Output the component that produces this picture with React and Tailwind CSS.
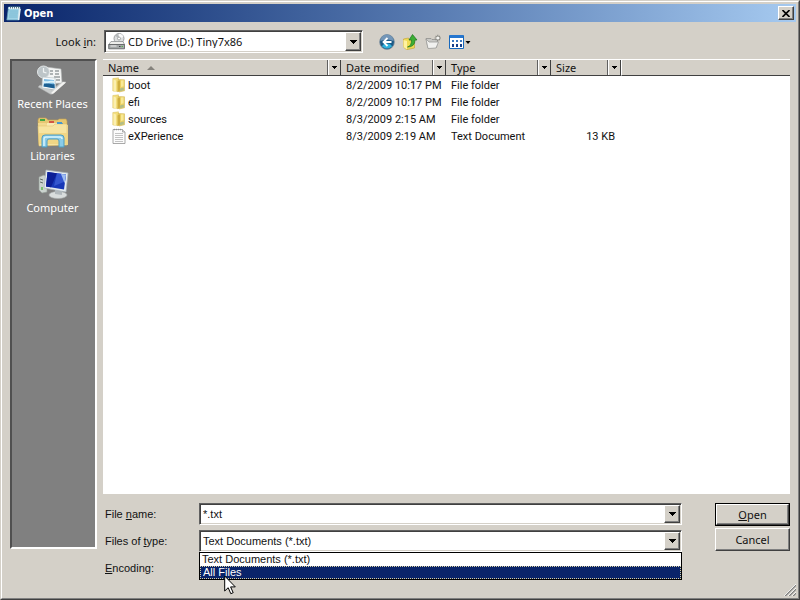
import React, { useState } from 'react';

const files = [
  { name: 'boot', date: '8/2/2009 10:17 PM', type: 'File folder', size: '', icon: FolderIcon },
  { name: 'efi', date: '8/2/2009 10:17 PM', type: 'File folder', size: '', icon: FolderIcon },
  { name: 'sources', date: '8/3/2009 2:15 AM', type: 'File folder', size: '', icon: FolderIcon },
  { name: 'eXPerience', date: '8/3/2009 2:19 AM', type: 'Text Document', size: '13 KB', icon: TextFileIcon },
];

const places = [
  { label: 'Recent Places', icon: RecentIcon },
  { label: 'Libraries', icon: LibrariesIcon },
  { label: 'Computer', icon: ComputerIcon },
];

const columns = ['Name', 'Date modified', 'Type', 'Size'];

const raised = 'border border-t-white border-l-white border-r-[#404040] border-b-[#404040] shadow-[inset_-1px_-1px_0_#808080]';
const sunken = 'border border-t-[#606060] border-l-[#606060] border-r-white border-b-white shadow-[inset_1px_1px_0_#404040,inset_-1px_-1px_0_#d4d0c8]';

function NotepadIcon() {
  return (
    <svg viewBox="0 0 16 16" className="w-4 h-4">
      <path d="M2.500 2h11.500l-1 13H.8z" fill="#9fd3e6" stroke="#5d9ab4" strokeWidth=".7" />
      <path d="M2.700 2h11l-.2 2H2.400z" fill="#e9f7fb" />
      <path d="M3.500 6h8.500M3.500 8h8.500M3 10h8.500M3 12h8.500" stroke="#6fb2cc" strokeWidth=".8" />
      <path d="M4.500 1v2.500M6.500 1v2.500M8.500 1v2.500M10.500 1v2.500M12.500 1v2.500" stroke="#37586c" strokeWidth=".8" />
      <path d="M13 3l1.800 1-1.500 11h-1.500z" fill="#e2eef2" />
    </svg>
  );
}

function DriveIcon() {
  return (
    <svg viewBox="0 0 17 17" className="w-[17px] h-[17px]">
      <circle cx="11" cy="5.500" r="5" fill="#dcdedf" stroke="#8b8e90" strokeWidth=".8" />
      <path d="M11 .8a4.700 4.700 0 0 1 4.400 3.200L11 5.500z" fill="#fafafa" />
      <path d="M7 3q1-2 3-2l1 4z" fill="#b4b8ba" />
      <circle cx="11" cy="5.500" r="1.500" fill="#fff" stroke="#85898b" strokeWidth=".7" />
      <path d="M3 8.500h12l1.500 3H.8z" fill="#ededeb" stroke="#84868a" strokeWidth=".7" />
      <path d="M.7 11.500h15.800v4.300H.7z" fill="#a5a8a9" stroke="#595c5e" strokeWidth=".8" />
      <path d="M2.500 13h6" stroke="#eee" />
      <path d="M11 13.500h1.500" stroke="#3d4245" />
      <path d="M13.500 13.500H15" stroke="#50b14b" />
    </svg>
  );
}

function FolderIcon() {
  return (
    <svg viewBox="0 0 14 16" className="w-3.5 h-4 shrink-0">
      <path d="M.8 1.500L6.500.8v13.700L.8 14z" fill="#f3de7d" stroke="#d9bf5c" strokeWidth=".5" />
      <path d="M6 2.500l6.500.3v11L7 15z" fill="#ead063" stroke="#cdae49" strokeWidth=".5" />
      <path d="M1.500 2.500l2.500 1v11.200l-2.500-1z" fill="#fbefb0" />
      <path d="M5.500 4.500L8 3.300v10.200l-2.500 1.700z" fill="#cfae3f" />
      <path d="M9 3.500l2.500-.3v6L9 10z" fill="#f8e997" />
      <path d="M8 11.500l3.800-1v2.800L8 14.300z" fill="#b2bd86" />
    </svg>
  );
}

function TextFileIcon() {
  return (
    <svg viewBox="0 0 14 16" className="w-3.5 h-4 shrink-0">
      <path d="M1 1.500h9.500L13 4v11.500H1z" fill="#fcfcfc" stroke="#939393" strokeWidth=".8" />
      <path d="M10.500 1.500V4H13" fill="#ddd" stroke="#939393" strokeWidth=".7" />
      <path d="M3 5.500h8M3 7.500h8M3 9.500h8M3 11.500h8M3 13.500h8" stroke="#b4b4b4" strokeWidth=".8" />
      <path d="M2.500.8v1.500M4.500.8v1.500M6.500.8v1.500M8.500.8v1.500" stroke="#858585" strokeWidth=".7" />
    </svg>
  );
}

function RecentIcon() {
  return (
    <svg viewBox="0 0 32 32" className="w-8 h-8">
      <path d="M2 22l12 7q2 1 4-1l12-11q-4-1-6 1l-8 7-12-5z" fill="#c9cccc" stroke="#a4a7a7" strokeWidth=".5" />
      <path d="M10 2l15 2 1 14-16 1z" fill="#f4f5f4" stroke="#b5b9b9" strokeWidth=".6" />
      <path d="M14 6h3M19 6h4M14 9h3M19 9h4M18 12h6M20 15h4" stroke="#969d9f" strokeWidth="1.300" />
      <circle cx="7.500" cy="7" r="6" fill="#bdc5c8" stroke="#e3e7e8" />
      <path d="M7.500 3v4l3 1" fill="none" stroke="#f0f3f4" strokeWidth="1.200" />
      <path d="M6.500 12l12.500 1 1 12-14-2z" fill="#f7fafb" stroke="#b9c4c9" strokeWidth=".7" />
      <path d="M8 14l10 1 .7 8L7.500 21.500z" fill="#80bce3" />
      <path d="M8 19c4-2 6 1 10.500 0l.2 4.500L7.500 21.500z" fill="#1c5f92" />
      <path d="M8 16c4 1 7-1 10 0v2c-4-1-6 1-10 0z" fill="#d8f2fb" />
      <path d="M15 28l12-11 3 .5L18 28q-1.500 1.500-3 0z" fill="#f3f3f1" />
    </svg>
  );
}

function LibrariesIcon() {
  return (
    <svg viewBox="0 0 32 32" className="w-8 h-8">
      <path d="M1 3l1-2h7l2 2h10l1-1h7l1 2v24H2z" fill="#e6c773" stroke="#c7a34e" strokeWidth=".6" />
      <path d="M3 2h5v2H3z" fill="#42a745" />
      <path d="M1 6h8l2 2h20v20H2z" fill="#f2d98f" />
      <path d="M10 6h10v3H10z" fill="#f9eab4" />
      <path d="M12 4h5v2h-5z" fill="#d45644" />
      <path d="M20 6h6v2h-6z" fill="#4597d0" />
      <path d="M1 9h15l2-2h12v21L2 29z" fill="#f7e4a1" stroke="#dcbd6a" strokeWidth=".5" />
      <path d="M20 5h5v2h-5z" fill="#4597d0" />
      <path d="M2 16h28v11H2z" fill="#f1d685" />
      <path d="M5 30V21q0-3 3-3h16q3 0 3 3v9h-5v-6q0-2-2-2h-8q-2 0-2 2v6z" fill="#8bcce8" stroke="#4c9dc2" />
      <path d="M7 29v-7q0-2 2-2h14q2 0 2 2" fill="none" stroke="#d6f3fd" strokeWidth="1.500" />
    </svg>
  );
}

function ComputerIcon() {
  return (
    <svg viewBox="0 0 32 32" className="w-8 h-8">
      <path d="M2 8l5-2 3 2v15l-5 1-3-3z" fill="#cbd3ce" stroke="#969e99" strokeWidth=".6" />
      <path d="M3 10l3 1M3 13l3 1" stroke="#5f6c65" />
      <path d="M4 18h2v3H4z" fill="#78bf6f" />
      <ellipse cx="21" cy="26" rx="9" ry="3.500" fill="#d9dddd" stroke="#abb0b0" strokeWidth=".6" />
      <path d="M18 20l7 1v5l-7-1z" fill="#b2b9bd" />
      <path d="M9 1l22 3-2 19-22-4z" fill="#e7edf0" stroke="#a6b1b9" strokeWidth=".7" />
      <path d="M10.500 3L29 5.500l-2 15L9 17.500z" fill="#1738b7" />
      <path d="M10.500 3L20 4.300l-6 14-5-.8z" fill="#0c1f96" />
      <path d="M20 4.300l9 1.200-1 7L17 17z" fill="#3356cf" />
      <path d="M24 5l5 .5-1.300 9z" fill="#9fbdf0" />
    </svg>
  );
}

function BackIcon() {
  return (
    <svg viewBox="0 0 16 16" className="w-4 h-4">
      <circle cx="8" cy="8" r="7.400" fill="#1b5a86" stroke="#8794a0" strokeWidth=".8" />
      <path d="M1.500 7a6.500 6.500 0 0 1 13 0Q8 4 1.500 7z" fill="#7396b8" />
      <path d="M3 12.500q5 4 10 0-1-3-5-3t-5 3z" fill="#2fb2dc" />
      <path d="M8.500 4L4.500 8l4 4M5 8h7.500" fill="none" stroke="#fff" strokeWidth="1.800" />
    </svg>
  );
}

function UpFolderIcon() {
  return (
    <svg viewBox="0 0 16 16" className="w-4 h-4">
      <path d="M1.500 5l5-1 1 2 5-1v9l-8 1.700L1.500 13z" fill="#f0dc55" stroke="#c6a63b" strokeWidth=".7" />
      <path d="M1.500 6l3.500 1v8.500l-3.500-2.500z" fill="#fff2a0" />
      <path d="M5.500 13q4-1 4-7H7L10.500.5 15 6h-2q0 7-7.500 7z" fill="#3caf35" stroke="#1c7322" strokeWidth=".7" />
    </svg>
  );
}

function NewFolderIcon() {
  return (
    <svg viewBox="0 0 16 16" className="w-4 h-4">
      <path d="M1 4.500h5l1 1h5.500l-1 8-8.500.5z" fill="#c9c9c6" stroke="#8f8f8d" strokeWidth=".8" />
      <path d="M1 5l3 3h9.500l-2.500 6-8 .5z" fill="#f1f1ef" stroke="#9d9d9b" strokeWidth=".8" />
      <path d="M12.800.8v6.400M9.600 4H16M10.600 1.800L15 6.200M15 1.800l-4.400 4.400" stroke="#84847f" strokeWidth="1.100" />
      <circle cx="12.800" cy="4" r="1.600" fill="#f5f5f2" />
    </svg>
  );
}

function ViewsIcon() {
  return (
    <svg viewBox="0 0 23 16" className="w-[23px] h-4">
      <path d="M1.500 1.500h14v13h-14z" fill="#fff" stroke="#1768bd" />
      <path d="M2 1h13v3H2z" fill="#2676cf" />
      <path d="M4 6h2v2H4zM8 6h2v2H8zM12 6h2v2h-2z" fill="#3b78be" />
      <path d="M4 10h2v3H4zM8 10h2v3H8zM12 10h2v3h-2z" fill="#173f89" />
      <path d="M17.500 7h5L20 10z" fill="#000" />
    </svg>
  );
}

function DownArrow() {
  return (
    <svg viewBox="0 0 7 4" className="w-[7px] h-1" shapeRendering="crispEdges">
      <path d="M0 0h7L3.500 4z" fill="#000" />
    </svg>
  );
}

function DropButton() {
  return (
    <span className={`pointer-events-none absolute inset-y-0.5 right-0.5 w-4 flex items-center justify-center bg-[#d4d0c8] ${raised}`}>
      <DownArrow />
    </span>
  );
}

function FileTable() {
  return (
    <table className="w-full table-fixed border-collapse">
      <colgroup>
        <col className="w-[238px]" />
        <col className="w-[105px]" />
        <col className="w-[105px]" />
        <col className="w-[70px]" />
        <col />
      </colgroup>
      <thead>
        <tr>
          {columns.map((name) => (
            <th key={name} className="p-0 font-normal text-left">
              <div className="flex h-[17px] bg-[#d4d0c8] border-t border-t-white border-b border-b-[#404040]">
                <button className="flex-1 flex items-center gap-2 pl-[5px] border-r border-r-[#606060]">
                  {name}
                  {name === 'Name' && (
                    <svg viewBox="0 0 8 4" className="w-2 h-1">
                      <path d="M0 4h8L4 0z" fill="#85827c" />
                    </svg>
                  )}
                </button>
                <button aria-label={`Filter ${name}`} className="w-[13px] flex items-center justify-center border-l border-l-white border-r border-r-[#404040]">
                  <svg viewBox="0 0 5 3" className="w-[5px] h-[3px]" shapeRendering="crispEdges">
                    <path d="M0 0h5L2.500 3z" fill="#000" />
                  </svg>
                </button>
              </div>
            </th>
          ))}
          <td className="p-0">
            <div className="h-[17px] bg-[#d4d0c8] border-t border-t-white border-l border-l-white border-b border-b-[#404040]" />
          </td>
        </tr>
      </thead>
      <tbody className="font-['Roboto',sans-serif]">
        {files.map(({ name, date, type, size, icon: Icon }) => (
          <tr key={name} className="h-[17px]">
            <td className="p-0">
              <div className="flex items-center gap-0.5 pl-[9px] h-[17px]">
                <Icon />
                <span className="pt-0.5">{name}</span>
              </div>
            </td>
            <td className="p-0 pt-0.5 pl-[5px] whitespace-nowrap">{date}</td>
            <td className="p-0 pt-0.5 pl-[5px] whitespace-nowrap">{type}</td>
            <td className="p-0 pt-0.5 pr-1.5 text-right whitespace-nowrap">{size}</td>
            <td className="p-0" />
          </tr>
        ))}
      </tbody>
    </table>
  );
}

export default function App() {
  const [fileName, setFileName] = useState('*.txt');

  return (
    <div className="min-h-screen flex flex-col bg-[#d4d0c8] text-[#111] text-[11px] leading-[13px] font-['Noto_Sans',sans-serif] cursor-default select-none border border-t-[#d4d0c8] border-l-[#d4d0c8] border-r-[#404040] border-b-[#404040]">
      <div className="flex-1 flex flex-col border border-t-white border-l-white border-r-[#808080] border-b-[#808080] p-0.5">
        <header className="h-[18px] flex items-center gap-0.5 pl-0.5 pr-0.5 bg-linear-to-r from-[#0a246a] to-[#a6caf0]">
          <NotepadIcon />
          <h1 className="flex-1 text-white font-bold font-['DejaVu_Sans_Condensed','DejaVu_Sans',sans-serif]">Open</h1>
          <button aria-label="Close" className={`w-4 h-3.5 flex items-center justify-center bg-[#d4d0c8] ${raised}`}>
            <svg viewBox="0 0 8 7" className="w-2 h-[7px]">
              <path d="M.5 0l7 7M7.500 0l-7 7" stroke="#000" strokeWidth="1.600" />
            </svg>
          </button>
        </header>

        <div className="flex items-center pt-2 pb-1.5">
          <label htmlFor="look-in" className="w-[92px] text-right mr-2">Look <u>i</u>n:</label>
          <div className="relative w-[259px] h-[23px]">
            <select id="look-in" className={`appearance-none w-full h-full bg-white pl-[23px] outline-none ${sunken}`}>
              <option>CD Drive (D:) Tiny7x86</option>
            </select>
            <span className="pointer-events-none absolute left-1 top-[3px]"><DriveIcon /></span>
            <DropButton />
          </div>
          <div className="flex items-center gap-[7px] ml-4">
            <button aria-label="Back"><BackIcon /></button>
            <button aria-label="Up one level"><UpFolderIcon /></button>
            <button aria-label="New folder"><NewFolderIcon /></button>
            <button aria-label="Views"><ViewsIcon /></button>
          </div>
        </div>

        <div className="flex-1 flex gap-1.5 pl-1.5 pr-1.5 pb-[17px]">
          <nav className="w-[87px] mb-[30px] pt-1 pr-0.5 flex flex-col items-center gap-[7px] bg-[#808080] border-2 border-t-[#505050] border-l-[#505050] border-r-white border-b-white">
            {places.map(({ label, icon: Icon }) => (
              <button key={label} className="flex flex-col items-center text-white whitespace-nowrap">
                <Icon />
                {label}
              </button>
            ))}
          </nav>

          <main className="flex-1 min-w-0 flex flex-col gap-[9px]">
            <div className="flex-1 bg-white">
              <FileTable />
            </div>

            <form className="flex gap-[33px] font-['Liberation_Sans',Arial,sans-serif]" onSubmit={(e) => e.preventDefault()}>
              <div className="flex-1 grid grid-cols-[94px_1fr] gap-y-[5px] items-center pl-0.5">
                <label htmlFor="file-name">File <u>n</u>ame:</label>
                <div className="relative h-[22px]">
                  <input
                    id="file-name"
                    value={fileName}
                    onChange={(e) => setFileName(e.target.value)}
                    className={`w-full h-full bg-white pl-[3px] outline-none ${sunken}`}
                  />
                  <DropButton />
                </div>

                <label htmlFor="file-type">Files of <u>t</u>ype:</label>
                <div className="relative h-[22px]">
                  <select id="file-type" className={`appearance-none w-full h-full bg-white pl-[3px] outline-none ${sunken}`}>
                    <option>Text Documents (*.txt)</option>
                    <option>All Files</option>
                  </select>
                  <DropButton />
                  <ul role="listbox" className="absolute z-10 top-full inset-x-0 bg-white border border-black">
                    <li role="option" className="pl-0.5">Text Documents (*.txt)</li>
                    <li role="option" aria-selected="true" className="pl-0.5 leading-[11px] bg-[#0a246a] text-white border border-dotted border-[#d8d0a0]">All Files</li>
                  </ul>
                  <svg viewBox="0 0 12 20" className="absolute z-20 left-[25px] top-[45px] w-3 h-5">
                    <path d="M.7 1v15l3.500-3.300 2.600 6 2.400-1-2.600-5.800h4.700z" fill="#fff" stroke="#000" />
                  </svg>
                </div>

                <label htmlFor="encoding"><u>E</u>ncoding:</label>
                <select id="encoding" className={`appearance-none w-full h-[22px] bg-white ${sunken}`} />
              </div>

              <div className="w-[75px] flex flex-col gap-0.5 font-['Noto_Sans',sans-serif]">
                <button type="submit" className="h-[23px] border border-black">
                  <span className={`h-full flex items-center justify-center ${raised}`}><span><u>O</u>pen</span></span>
                </button>
                <button type="button" className={`h-[23px] ${raised}`}>Cancel</button>
              </div>
            </form>
          </main>
        </div>
      </div>

      <svg viewBox="0 0 12 12" className="absolute bottom-1 right-1 w-3 h-3">
        <path d="M1 12L12 1M5 12l7-7M9 12l3-3" stroke="#808080" strokeWidth="1.500" />
        <path d="M0 12L12 0M4 12l8-8M8 12l4-4" stroke="#fff" strokeWidth=".8" />
      </svg>
    </div>
  );
}
